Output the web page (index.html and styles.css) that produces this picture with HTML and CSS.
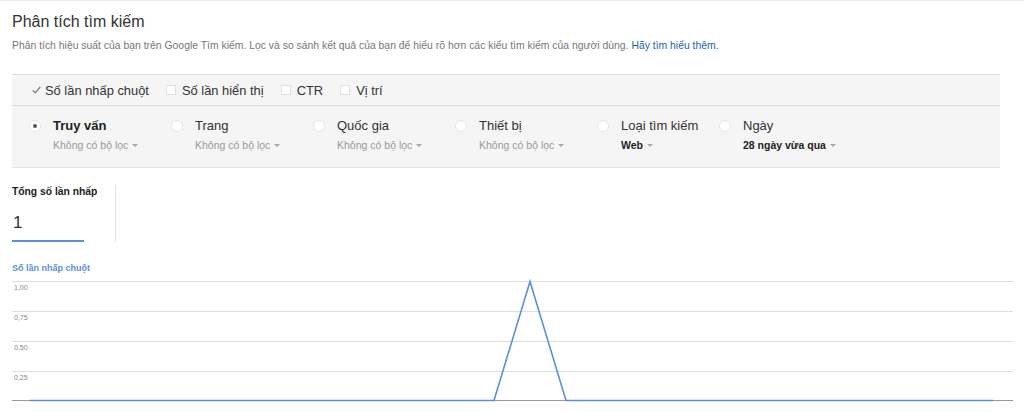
FILE: index.html
```html
<!DOCTYPE html>
<html lang="vi">
<head>
<meta charset="utf-8">
<title>Phân tích tìm kiếm</title>
<link rel="stylesheet" href="styles.css">
</head>
<body>
<div class="page">
  <h1 class="title">Phân tích tìm kiếm</h1>
  <p class="desc">Phân tích hiệu suất của bạn trên Google Tìm kiếm. Lọc và so sánh kết quả của bạn để hiểu rõ hơn các kiểu tìm kiếm của người dùng. <a class="link" href="#">Hãy tìm hiểu thêm.</a></p>

  <div class="panel">
    <div class="metrics">
      <div class="metric">
        <svg class="check" width="9" height="8" viewBox="0 0 9 8"><polyline points="0.7,4.3 3.2,6.8 8.3,0.8" fill="none" stroke="#666" stroke-width="1.1"/></svg>
        <span>Số lần nhấp chuột</span>
      </div>
      <div class="metric"><span class="box"></span><span>Số lần hiển thị</span></div>
      <div class="metric"><span class="box"></span><span>CTR</span></div>
      <div class="metric"><span class="box"></span><span>Vị trí</span></div>
    </div>
    <div class="dims">
      <div class="dim">
        <span class="radio radio-on"></span>
        <div class="dim-text">
          <div class="dim-label dim-label-on">Truy vấn</div>
          <div class="dim-sub">Không có bộ lọc <span class="caret"></span></div>
        </div>
      </div>
      <div class="dim">
        <span class="radio"></span>
        <div class="dim-text">
          <div class="dim-label">Trang</div>
          <div class="dim-sub">Không có bộ lọc <span class="caret"></span></div>
        </div>
      </div>
      <div class="dim">
        <span class="radio"></span>
        <div class="dim-text">
          <div class="dim-label">Quốc gia</div>
          <div class="dim-sub">Không có bộ lọc <span class="caret"></span></div>
        </div>
      </div>
      <div class="dim">
        <span class="radio"></span>
        <div class="dim-text">
          <div class="dim-label">Thiết bị</div>
          <div class="dim-sub">Không có bộ lọc <span class="caret"></span></div>
        </div>
      </div>
      <div class="dim dim-narrow">
        <span class="radio"></span>
        <div class="dim-text">
          <div class="dim-label">Loại tìm kiếm</div>
          <div class="dim-sub dim-sub-set">Web <span class="caret"></span></div>
        </div>
      </div>
      <div class="dim">
        <span class="radio"></span>
        <div class="dim-text">
          <div class="dim-label">Ngày</div>
          <div class="dim-sub dim-sub-set">28 ngày vừa qua <span class="caret"></span></div>
        </div>
      </div>
    </div>
  </div>

  <div class="summary">
    <div class="card">
      <div class="card-title">Tổng số lần nhấp</div>
      <div class="card-value">1</div>
    </div>
    <div class="divider"></div>
  </div>

  <div class="chart-title">Số lần nhấp chuột</div>
  <svg class="chart" width="1001" height="137" viewBox="0 0 1001 137">
    <g stroke="#dedede" stroke-width="1">
      <line x1="0" y1="6.5" x2="1001" y2="6.5"/>
      <line x1="0" y1="36.5" x2="1001" y2="36.5"/>
      <line x1="0" y1="66.5" x2="1001" y2="66.5"/>
      <line x1="0" y1="96.5" x2="1001" y2="96.5"/>
    </g>
    <line x1="0" y1="125.5" x2="1001" y2="125.5" stroke="#999" stroke-width="1"/>
    <g class="axis" fill="#888" font-size="7">
      <text x="2" y="14.5">1,00</text>
      <text x="2" y="44.5">0,75</text>
      <text x="2" y="74.5">0,50</text>
      <text x="2" y="104.5">0,25</text>
    </g>
    <polyline points="18,125.5 482,125.5 518,6.5 554,125.5 981,125.5" fill="none" stroke="#5b8fdc" stroke-width="1.6" stroke-linejoin="miter"/>
  </svg>
</div>
</body>
</html>
```

FILE: styles.css
```css
html, body {
  margin: 0;
  padding: 0;
  background: #fff;
  overflow: hidden;
}

body {
  font-family: "Liberation Sans", Arial, sans-serif;
  color: #333;
}

.page {
  width: 988px;
  padding: 0 24px 0 12px;
  border-top: 1px solid #eeeeee;
  box-sizing: content-box;
}

.title {
  margin: 11px 0 0;
  font-size: 16px;
  line-height: 20px;
  font-weight: normal;
  color: #333;
}

.desc {
  margin: 7px 0 0;
  font-size: 10.4px;
  line-height: 14px;
  color: #777;
}

.link {
  color: #1f5fb3;
  text-decoration: none;
}

.panel {
  margin-top: 21px;
  background: #f5f5f5;
  border-top: 1px solid #dcdcdc;
  border-bottom: 1px solid #e2e2e2;
}

.metrics {
  display: flex;
  align-items: center;
  height: 30px;
  padding-left: 20px;
  border-bottom: 1px solid #dcdcdc;
  font-size: 12.9px;
  color: #333;
}

.metric {
  display: flex;
  align-items: center;
  margin-right: 17px;
}

.check {
  margin: 0 4px 0 0;
  display: block;
}

.box {
  width: 8px;
  height: 8px;
  background: #fff;
  border: 1px solid #e0e0e0;
  margin-right: 6px;
}

.dims {
  display: flex;
  height: 61px;
  padding-left: 17px;
}

.dim {
  display: flex;
  width: 142px;
  padding-top: 12px;
  box-sizing: border-box;
}

.dim-narrow {
  width: 122px;
}

.radio {
  position: relative;
  width: 10px;
  height: 10px;
  margin-top: 2px;
  margin-right: 12px;
  border-radius: 50%;
  background: #fff;
  border: 1px solid #e4e4e4;
  flex: none;
}

.radio-on::after {
  content: "";
  position: absolute;
  left: 3px;
  top: 3px;
  width: 4px;
  height: 4px;
  border-radius: 50%;
  background: #555;
}

.dim-text {
  display: flex;
  flex-direction: column;
}

.dim-label {
  font-size: 13px;
  line-height: 16px;
  color: #333;
}

.dim-label-on {
  font-weight: bold;
  color: #222;
}

.dim-sub {
  margin-top: 4px;
  font-size: 10.5px;
  line-height: 14px;
  color: #999;
  display: flex;
  align-items: center;
}

.dim-sub-set {
  font-weight: bold;
  color: #222;
}

.caret {
  width: 0;
  height: 0;
  margin-left: 4px;
  border-left: 3px solid transparent;
  border-right: 3px solid transparent;
  border-top: 3px solid #aaa;
}

.summary {
  display: flex;
  margin-top: 17px;
}

.card {
  width: 72px;
  padding-bottom: 7px;
  border-bottom: 2px solid #5b8fdc;
}

.card-title {
  font-size: 10.3px;
  line-height: 14px;
  font-weight: bold;
  color: #222;
  white-space: nowrap;
}

.card-value {
  margin-top: 14px;
  font-size: 17px;
  line-height: 20px;
  color: #333;
  padding-left: 1px;
}

.divider {
  width: 1px;
  margin-left: 31px;
  background: #e3e3e3;
}

.chart-title {
  margin-top: 20px;
  font-size: 9px;
  line-height: 12px;
  font-weight: bold;
  color: #5b8fdc;
}

.chart {
  display: block;
  margin-top: 1px;
  font-family: "Liberation Sans", Arial, sans-serif;
}
```
